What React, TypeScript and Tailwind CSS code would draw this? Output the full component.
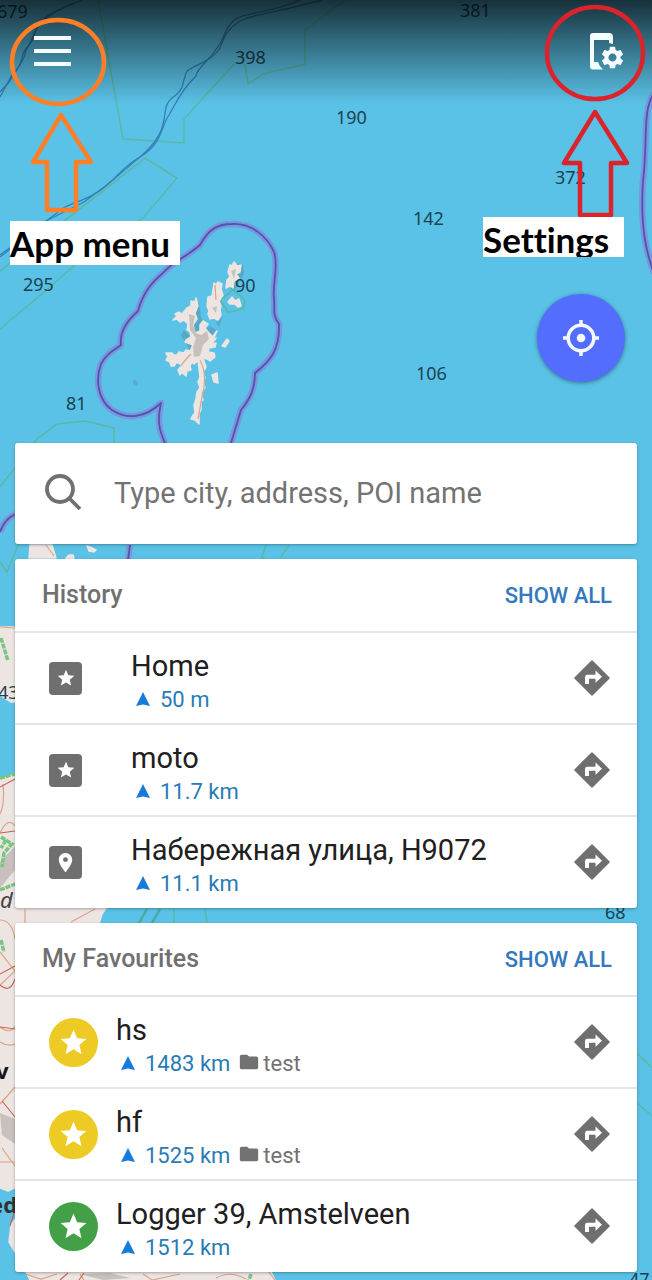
import type { ReactNode } from "react";
import { MdFolder, MdPlace, MdSettings, MdStar } from "react-icons/md";

type Place = {
  name: string;
  distance: string;
  kind: "star" | "pin" | "yellow" | "green";
  folder?: string;
};

const history: Place[] = [
  { name: "Home", distance: "50 m", kind: "star" },
  { name: "moto", distance: "11.7 km", kind: "star" },
  { name: "Набережная улица, Н9072", distance: "11.1 km", kind: "pin" },
];

const favourites: Place[] = [
  { name: "hs", distance: "1483 km", kind: "yellow", folder: "test" },
  { name: "hf", distance: "1525 km", kind: "yellow", folder: "test" },
  { name: "Logger 39, Amstelveen", distance: "1512 km", kind: "green" },
];

const depths: [number, number, string][] = [
  [-3, 18, "679"],
  [460, 17, "381"],
  [235, 64, "398"],
  [336, 124, "190"],
  [555, 184, "372"],
  [413, 225, "142"],
  [23, 291, "295"],
  [235, 292, "90"],
  [416, 380, "106"],
  [66, 410, "81"],
  [605, 919, "68"],
  [629, 1286, "47"],
  [-2, 699, "43"],
];

function SeaMap() {
  return (
    <svg
      className="absolute inset-0 h-full w-full"
      viewBox="0 0 652 1280"
      preserveAspectRatio="xMidYMin slice"
      aria-hidden="true"
    >
      <rect width="652" height="1280" fill="#5ac2e7" />
      <g fill="none" stroke="#5bb8a8" strokeWidth="1.6">
        <path d="M98 0 123 139 184 143V119L235 63M245 64 248 84 263 74 305 64V30L345 0" />
        <path d="M0 329 43 293 75 265 143 218 177 178 145 158 68 218 0 271" />
        <path d="M0 487 38 438 57 424 85 421 114 428V445M0 562 7 572 18 545M266 545 262 557 268 562M289 545 281 557" />
        <path d="M174 909V923M205 909 207 923M637 1053 652 1068M637 1103 652 1116M220 300 233 290 245 300 243 309 228 312Z" />
      </g>
      <g fill="none" stroke="#3480b5" strokeWidth="1.3">
        <path d="M82 0C65 8 52 11 46 17S36 27 34 36 25 46 23 54 21 66 12 75L0 97" />
        <path d="M73 3C52 13 39 20 33 36S26 47 25 54 13 75 9 82L0 92" />
        <path d="M322 0C297 7 270 12 247 18 228 25 223 39 220 48 210 64 188 66 186 73 182 85 184 88 176 95 162 104 167 112 163 124 160 139 147 151 140 157 121 168 121 174 108 184 94 197 81 200 65 207L0 255" />
        <path d="M300 0C270 14 243 12 234 20 221 33 228 35 215 51 208 61 197 68 196 76 181 90 175 105 169 115 160 128 163 143 140 157 126 168 118 178 84 202L46 221 0 257" />
      </g>
      <g fill="none" strokeLinejoin="round">
        <g stroke="#7897dc" strokeWidth="6.500">
          <path d="M165 443C159 430 157 420 161 403 145 418 127 420 112 410 98 400 95 380 101 364 107 353 114 350 121 345 119 331 129 319 138 311 143 293 151 283 163 273 172 262 185 258 200 245 209 228 219 224 232 224 251 223 267 236 274 252 279 267 272 284 274 298 275 311 272 314 279 324 280 351 269 362 255 373 255 389 250 399 241 410L231 443" />
          <path d="M654 94C642 108 648 145 643 181 640 226 646 252 654 273M0 532Q5 518 16 514M130 545 128 560M252 1274Q260 1276 264 1283" />
        </g>
        <g stroke="#5551b0" strokeWidth="1.8">
          <path d="M165 443C159 430 157 420 161 403 145 418 127 420 112 410 98 400 95 380 101 364 107 353 114 350 121 345 119 331 129 319 138 311 143 293 151 283 163 273 172 262 185 258 200 245 209 228 219 224 232 224 251 223 267 236 274 252 279 267 272 284 274 298 275 311 272 314 279 324 280 351 269 362 255 373 255 389 250 399 241 410L231 443" />
          <path d="M654 94C642 108 648 145 643 181 640 226 646 252 654 273M0 532Q5 518 16 514M130 545 128 560M252 1274Q260 1276 264 1283" />
        </g>
      </g>
      <g fill="#5597ad" opacity=".6">
        <path d="M238 263 243 265 244 274 240 281 235 290 230 289ZM199 302 201 317 204 322 200 334 210 326 216 330 205 345 201 365 194 363 187 344ZM184 330 192 338 189 347 181 336ZM216 323 223 316 219 327ZM134 379 138 383 137 386 133 383Z" />
      </g>
      <g fill="#ece5e2" stroke="#ece5e2" strokeWidth="1.5" strokeLinejoin="round">
        <path d="M230 265 232 266 234 262 237 266 241 265 240 272 236 274 239 278 234 281 233 288 230 286 226 288 227 280 230 277 228 272Z" />
        <path d="M214 283 216 285 218 282 222 284 221 289 223 295 219 301 221 306 220 310 221 315 218 320 214 318 210 319 208 314 209 311 207 306 208 297 212 296 213 290Z" />
        <path d="M187 308 191 306 191 301 195 302 196 298 198 306 195 313 197 319 193 325 195 333 200 331 200 325 203 321 208 324 205 328 208 332 211 335 213 340 216 338 211 345 216 343 215 347 209 348 208 352 214 353 215 357 210 361 207 359 203 358 206 367 203 372 205 378 203 380 205 388 201 393 203 400 201 401 201 410 199 413 199 424 195 420 191 419 193 415 195 413 194 405 196 399 197 392 200 388 198 382 200 377 198 361 194 364 192 362 190 366 191 370 187 371 186 376 181 372 180 375 178 370 182 365 177 362 174 366 171 366 170 362 166 360 168 357 166 353 172 353 174 355 177 355 179 352 184 353 186 350 190 351 193 345 188 343 185 342 186 340 191 337 190 332 187 330 188 324 184 320 180 322 177 319 173 320 177 316 175 314 179 312 182 314Z" />
        <path d="M228 302 232 297 235 301 239 299 241 306 238 307 235 304 230 304ZM222 346 227 339 229 341 225 347ZM212 375 217 373 218 383 214 382ZM210 340 217 331 212 342ZM30 545H52L56 558H29ZM87 546 92 548 96 550 94 552 89 551ZM66 558 69 555 73 555 74 559Z" />
        <path d="M0 627H14L22 633V702H11L0 695ZM0 780 15 774H22V908H106L102 914 99 924H22V1184L8 1191 0 1188Z" />
        <path d="M22 1210 11 1225 9 1242 20 1260 30 1280H275L268 1266H22Z" />
      </g>
      <g fill="#aaa3a2" opacity=".55">
        <path d="M189 314 195 316 193 325 196 333 201 335 207 331 209 339 203 345 200 356 194 357 193 347 196 338 190 330ZM212 308 217 306 216 313ZM231 271 236 269 234 279ZM0 862 15 846V870L0 888ZM0 1113 15 1119V1144L2 1135ZM80 1274 110 1273 130 1278 103 1280Z" />
      </g>
      <g fill="none" stroke="#dba487" strokeWidth="1.2">
        <path d="M200 360Q208 375 202 397L198 419M191 354Q184 361 181 366M215 285 216 300M46 545 54 556M0 627 15 628M0 833Q8 816 15 826M3 784Q5 804 0 814M0 920Q12 920 15 939M25 909V923M71 922 95 909M0 952 15 971 0 985M0 1027Q10 1035 15 1026M0 1042Q8 1047 15 1044M0 1104Q10 1093 15 1087M2 1148 15 1166M0 1162H15M25 1274 41 1279 57 1274M80 1274 84 1280M143 1274 152 1280 180 1274M216 1278Q230 1270 246 1279M275 1280 268 1271" />
      </g>
      <g fill="none" stroke="#c9624d" strokeWidth="1.1">
        <path d="M15 779 0 787M15 831 0 833M0 974 15 966M15 979Q10 994 0 985M0 1027 15 1029M2 1101 15 1117M15 1210 10 1226M68 1273 60 1280M84 1273 79 1280" />
      </g>
      <g fill="none" stroke="#79c683" strokeWidth="3.500" strokeDasharray="5 1">
        <path d="M1 638 8 661M0 778 15 774M1 837 12 844 4 853 2 867M6 840 1 848M0 890 15 884M1 940 4 952M251 1274 248 1283" />
      </g>
      <path d="M147 909 139 923M160 909 152 923" fill="none" stroke="#4fa6a4" strokeWidth="2.500" />
      <g fill="#1b4252" fontFamily="Noto Sans, sans-serif" fontSize="18">
        {depths.map(([x, y, label]) => (
          <text key={label} x={x} y={y}>
            {label}
          </text>
        ))}
        <text x="0" y="908" fontSize="22" fontStyle="italic" fill="#444">
          d
        </text>
        <text x="-4" y="1079" fontSize="22" fontWeight="700" fill="#151515">
          v
        </text>
        <text x="-10" y="1213" fontSize="22" fontWeight="700" fill="#333">
          ed
        </text>
      </g>
    </svg>
  );
}

function PhoneSettingsIcon() {
  return (
    <svg width="36" height="38" viewBox="0 0 36 38" fill="#f4fcff" aria-hidden="true">
      <path d="M4 1H20Q24 1 24 5V12L20 11V8H5V30H9Q10 34 14 37.500H4Q1 37.500 1 34V4Q1 1 4 1Z" />
      <MdSettings x="10" y="12" size={27} color="#f4fcff" className="fill-[#f4fcff]" />
    </svg>
  );
}

function DirectionsIcon() {
  return (
    <svg width="36" height="36" viewBox="0 0 36 36" aria-hidden="true">
      <path d="M18 1.500 34.500 18 18 34.500 1.500 18Z" fill="#6f6f6f" stroke="#6f6f6f" strokeWidth="2.400" strokeLinejoin="round" />
      <path d="M11 24V17Q11 14.700 13.300 14.700H21.500V10.500L28 16.700 21.500 22.800V18.700H15V24Z" fill="#fff" />
    </svg>
  );
}

function Callout({ color, label, side }: { color: string; label: string; side: "left" | "right" }) {
  return side === "left" ? (
    <div className="pointer-events-none absolute top-0 left-0">
      <svg width="190" height="221" fill="none" stroke={color} strokeWidth="4.500" aria-hidden="true">
        <ellipse cx="58" cy="62" rx="46" ry="42" />
        <path d="M61 115 33 162H47V210H76V162H91Z" strokeLinejoin="round" />
      </svg>
      <span className="ml-[10px] block h-11 w-[170px] bg-white font-['Lato',sans-serif] text-[35px] leading-[44px] font-bold text-black [font-variant-ligatures:none]">
        {label}
      </span>
    </div>
  ) : (
    <div className="pointer-events-none absolute top-0 right-0">
      <svg width="169" height="217" fill="none" stroke={color} strokeWidth="4.500" aria-hidden="true">
        <ellipse cx="112" cy="53" rx="48" ry="46" />
        <path d="M112 112 81 163H97V215H128V163H144Z" strokeLinejoin="round" />
      </svg>
      <span className="block h-10 w-[141px] overflow-hidden bg-white font-['Lato',sans-serif] text-[35px] leading-[44px] font-bold text-black [font-variant-ligatures:none]">
        {label}
      </span>
    </div>
  );
}

function PlaceIcon({ kind }: { kind: Place["kind"] }) {
  if (kind === "star" || kind === "pin") {
    return (
      <span className="mr-[49px] flex size-[33px] items-center justify-center rounded bg-[#6f6f6f] text-white">
        {kind === "star" ? <MdStar size={20} /> : <MdPlace size={23} />}
      </span>
    );
  }
  const tone = kind === "yellow" ? "bg-[#edcb24]" : "bg-[#43a047]";
  return (
    <span className={`mr-[18px] flex size-[49px] items-center justify-center rounded-full text-white ${tone}`}>
      <MdStar size={31} />
    </span>
  );
}

function PlaceRow({ place }: { place: Place }) {
  return (
    <li className="flex h-[92px] items-center border-t-2 border-[#e4e4e4] pr-[27px] pl-[34px]">
      <PlaceIcon kind={place.kind} />
      <div className="min-w-0 flex-1 pt-[7px]">
        <p className="truncate text-[29px] leading-9 text-[#202020]">{place.name}</p>
        <p className="flex items-center pl-[5px] text-[22px] leading-8 text-[#287bb5]">
          <svg width="14" height="16" viewBox="0 0 14 16" className="mr-[10px]" aria-hidden="true">
            <path d="M7 0 14 14 7 12.500 0 14Z" fill="#177bdc" />
          </svg>
          {place.distance}
          {place.folder && (
            <span className="ml-2 flex items-center gap-[3px] text-[#727272]">
              <MdFolder size={22} className="mb-1" />
              {place.folder}
            </span>
          )}
        </p>
      </div>
      <button type="button" aria-label={`Directions to ${place.name}`}>
        <DirectionsIcon />
      </button>
    </li>
  );
}

function Card({ children }: { children: ReactNode }) {
  return <section className="rounded-[3px] bg-white shadow-[0_1px_3px_rgba(0,0,0,0.3)]">{children}</section>;
}

function PlaceCard({ title, places }: { title: string; places: Place[] }) {
  return (
    <Card>
      <div className="flex h-[72px] items-center justify-between pr-[25px] pl-[27px]">
        <h2 className="text-[25px] font-medium text-[#707070]">{title}</h2>
        <button type="button" className="pt-px text-[22px] font-medium text-[#3478bd]">
          SHOW ALL
        </button>
      </div>
      <ul className="pb-px">
        {places.map((place) => (
          <PlaceRow key={place.name} place={place} />
        ))}
      </ul>
    </Card>
  );
}

export default function App() {
  return (
    <div className="relative flex min-h-screen flex-col overflow-hidden bg-[#5ac2e7] font-['Roboto',sans-serif]">
      <SeaMap />
      <header className="relative flex h-[104px] items-start justify-between bg-linear-to-b from-black/75 to-transparent pr-[27px] pl-[34px]">
        <button type="button" aria-label="App menu" className="mt-9 flex flex-col gap-[9px]">
          <span className="h-1 w-[37px] bg-[#f4fcff]" />
          <span className="h-1 w-[37px] bg-[#f4fcff]" />
          <span className="h-1 w-[37px] bg-[#f4fcff]" />
        </button>
        <button type="button" aria-label="Settings" className="mt-8">
          <PhoneSettingsIcon />
        </button>
      </header>
      <main className="relative flex flex-col gap-[15px] px-[15px] pb-2">
        <button
          type="button"
          aria-label="My location"
          className="mt-[190px] mr-3 mb-[46px] flex size-[88px] items-center justify-center self-end rounded-full bg-[#536dfe] shadow-[0_1px_4px_rgba(0,0,0,0.4)]"
        >
          <svg width="38" height="38" viewBox="0 0 38 38" fill="none" stroke="#f4f8ff" strokeWidth="3.500" aria-hidden="true">
            <circle cx="19" cy="19" r="12.800" />
            <path d="M19 1V6M19 32V37M1 19H6M32 19H37" />
            <circle cx="19" cy="19" r="4.300" fill="#f4f8ff" stroke="none" />
          </svg>
        </button>
        <Card>
          <label className="flex h-[101px] items-center pl-[29px]">
            <svg width="40" height="40" viewBox="0 0 40 40" fill="none" stroke="#707070" strokeWidth="3.800" aria-hidden="true">
              <circle cx="16" cy="15" r="13" />
              <path d="M25 24 36 35" />
            </svg>
            <input
              type="text"
              aria-label="Search"
              placeholder="Type city, address, POI name"
              className="ml-[30px] min-w-0 flex-1 bg-transparent text-[29px] text-[#202020] outline-none placeholder:text-[#737373]"
            />
          </label>
        </Card>
        <PlaceCard title="History" places={history} />
        <PlaceCard title="My Favourites" places={favourites} />
      </main>
      <Callout color="#ff7f27" label="App menu" side="left" />
      <Callout color="#dc232c" label="Settings" side="right" />
    </div>
  );
}
